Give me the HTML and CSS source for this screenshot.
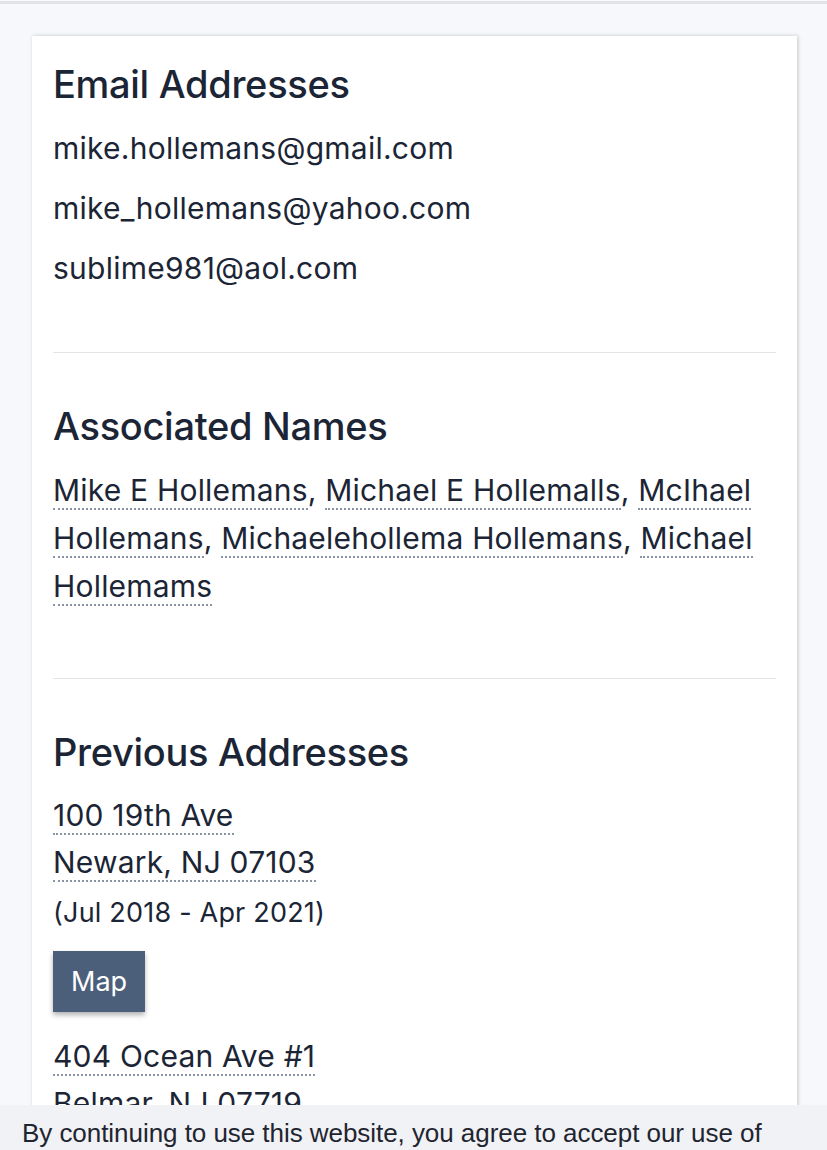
FILE: index.html
```html
<!DOCTYPE html>
<html lang="en">
<head>
  <meta charset="UTF-8">
  <meta name="viewport" content="width=device-width, initial-scale=1">
  <title>Mike Hollemans</title>
  <link rel="stylesheet" href="styles.css">
</head>
<body>
  <div class="topline"></div>

  <div class="card">
    <!-- Emails -->
    <section class="block">
      <h2>Email Addresses</h2>
      <p class="email">mike.hollemans@gmail.com</p>
      <p class="email">mike_hollemans@yahoo.com</p>
      <p class="email">sublime981@aol.com</p>
    </section>

    <!-- Names -->
    <section class="block">
      <h2>Associated Names</h2>
      <p class="names">
        <a href="#">Mike E Hollemans</a>, <a href="#">Michael E Hollemalls</a>, <a href="#">McIhael Hollemans</a>, <a href="#">Michaelehollema Hollemans</a>, <a href="#">Michael Hollemams</a>
      </p>
    </section>

    <!-- Addresses -->
    <section class="block last">
      <h2>Previous Addresses</h2>
      <div class="address">
        <a href="#">100 19th Ave</a><br>
        <a href="#">Newark, NJ 07103</a>
        <div class="dates">(Jul 2018 - Apr 2021)</div>
        <button class="map-btn">Map</button>
      </div>
      <div class="address">
        <a href="#">404 Ocean Ave #1</a><br>
        <a href="#">Belmar, NJ 07719</a>
        <div class="dates">(Jan 2010 - Jun 2018)</div>
        <button class="map-btn">Map</button>
      </div>
    </section>
  </div>

  <div class="cookie-bar">
    By continuing to use this website, you agree to accept our use of cookies.
  </div>
</body>
</html>
```

FILE: styles.css
```css
body {
  margin: 0;
  background-color: #f7f8fb;
  color: #1b2535;
  font-family: Inter, "Noto Sans", sans-serif;
}

.topline {
  height: 3px;
  margin-top: 1px;
  background-color: #e1e3e7;
}

/* Main white panel */
.card {
  background-color: #fff;
  margin: 32px 30px 0 32px;
  padding: 0 21px;
  box-shadow: 1px 0 4px rgba(0, 0, 0, 0.2);
}

.block {
  border-bottom: 1px solid #e2e4e6;
  padding: 51px 0 48px 0;
}

.block:first-child {
  padding-top: 26px;
}

.block.last {
  border-bottom: none;
}

h2 {
  font-size: 38px;
  line-height: 44px;
  font-weight: 500;
  margin: 0 0 18px 0;
  letter-spacing: -0.3px;
}

.email {
  font-size: 30px;
  line-height: 48px;
  margin: 0 0 12px 0;
  letter-spacing: 0.25px;
}

.names {
  font-size: 30px;
  line-height: 48px;
  margin: 0 0 20px 0;
  letter-spacing: 0.2px;
}

a {
  color: #1b2535;
  text-decoration: none;
  border-bottom: 2px dotted #8a94a3;
}

.address {
  font-size: 30px;
  line-height: 47px;
  margin-bottom: 21px;
  letter-spacing: 0.2px;
}

.dates {
  font-size: 27px;
  line-height: 40px;
  margin-top: 7px;
}

.map-btn {
  background-color: #4b5f7b;
  color: #fff;
  border: none;
  font-family: inherit;
  font-size: 27px;
  padding: 0 18px;
  height: 61px;
  margin-top: 18px;
  box-shadow: 0 3px 5px rgba(0, 0, 0, 0.3);
}

.cookie-bar {
  position: fixed;
  top: 1105px;
  left: 0;
  right: 0;
  background-color: #f1f2f5;
  padding: 12px 22px;
  font-family: "Liberation Sans", Arial, sans-serif;
  font-size: 26px;
  line-height: 32px;
  color: #1f2530;
  letter-spacing: -0.05px;
}
```
